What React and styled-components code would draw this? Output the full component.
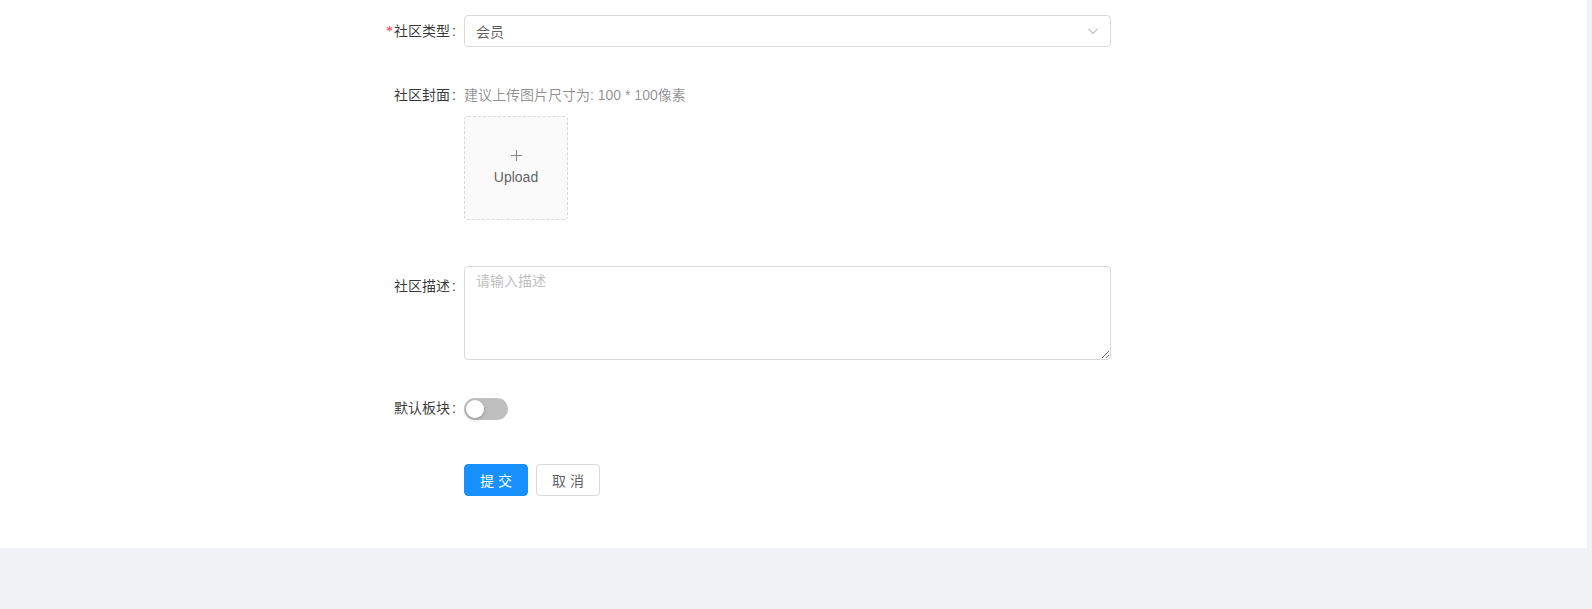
import React from 'react';
import styled, { createGlobalStyle } from 'styled-components';

const GlobalStyle = createGlobalStyle`
  html, body {
    margin: 0;
    padding: 0;
    background: #f0f2f5;
  }

  body {
    font-family: "Liberation Sans", "Noto Sans CJK SC", sans-serif;
    font-size: 14px;
    color: rgba(0, 0, 0, 0.65);
  }
`;

const Page = styled.div`
  width: 1592px;
  height: 609px;
  background: #f0f2f5;
  overflow: hidden;
`;

const Panel = styled.div`
  width: 1587px;
  height: 548px;
  background: #fff;
  box-sizing: border-box;
  padding-top: 11px;
`;

const FormItem = styled.div`
  display: flex;
  align-items: flex-start;
  margin-bottom: ${(p) => p.$mb || 24}px;
`;

const Label = styled.label`
  width: 464px;
  flex-shrink: 0;
  text-align: right;
  line-height: 40px;
  height: 40px;
  color: rgba(0, 0, 0, 0.8);
  white-space: nowrap;

  &::after {
    content: ':';
    margin: 0 8px 0 2px;
  }
`;

const Required = styled.span`
  color: #f5222d;
  margin-right: 1px;
  font-family: "Liberation Serif", serif;
  font-size: 14px;
`;

const Control = styled.div`
  width: 647px;
  min-height: 40px;
  display: flex;
  flex-direction: column;
  justify-content: ${(p) => (p.$top ? 'flex-start' : 'center')};
`;

const Select = styled.div`
  height: 32px;
  box-sizing: border-box;
  border: 1px solid #d9d9d9;
  border-radius: 4px;
  display: flex;
  align-items: center;
  justify-content: space-between;
  padding: 0 11px;
  color: rgba(0, 0, 0, 0.65);
`;

const Arrow = styled.svg`
  width: 12px;
  height: 12px;
  color: rgba(0, 0, 0, 0.25);
`;

const Hint = styled.div`
  line-height: 40px;
  height: 40px;
  color: rgba(0, 0, 0, 0.45);
`;

const UploadCard = styled.div`
  width: 104px;
  height: 104px;
  margin-top: 1px;
  box-sizing: border-box;
  border: 1px dashed #d9d9d9;
  border-radius: 4px;
  background: #fafafa;
  display: flex;
  flex-direction: column;
  align-items: center;
  justify-content: center;
  gap: 5px;
`;

const PlusIcon = styled.svg`
  width: 13px;
  height: 13px;
  color: #888;
`;

const UploadText = styled.div`
  color: rgba(0, 0, 0, 0.65);
  line-height: 20px;
`;

const TextArea = styled.textarea`
  display: block;
  width: 647px;
  height: 94px;
  box-sizing: border-box;
  border: 1px solid #d9d9d9;
  border-radius: 4px;
  padding: 4px 11px;
  font-family: inherit;
  font-size: 14px;
  line-height: 1.5;
  color: rgba(0, 0, 0, 0.65);
  resize: vertical;
  outline: none;

  &::placeholder {
    color: #bfbfbf;
  }
`;

const Switch = styled.button`
  position: relative;
  display: block;
  margin-top: 2px;
  width: 44px;
  height: 22px;
  border: none;
  border-radius: 100px;
  padding: 0;
  background: rgba(0, 0, 0, 0.25);
  cursor: pointer;

  &::after {
    content: '';
    position: absolute;
    top: 2px;
    left: 2px;
    width: 18px;
    height: 18px;
    border-radius: 50%;
    background: #fff;
    box-shadow: 0 2px 4px 0 rgba(0, 35, 11, 0.2);
  }
`;

const Actions = styled.div`
  display: flex;
  align-items: center;
  gap: 8px;
  height: 40px;
`;

const Button = styled.button`
  width: 64px;
  height: 32px;
  box-sizing: border-box;
  border-radius: 4px;
  font-family: inherit;
  font-size: 14px;
  letter-spacing: 4px;
  text-indent: 4px;
  padding: 0;
  cursor: pointer;
  border: 1px solid ${(p) => (p.$primary ? '#1890ff' : '#d9d9d9')};
  background: ${(p) => (p.$primary ? '#1890ff' : '#fff')};
  color: ${(p) => (p.$primary ? '#fff' : 'rgba(0, 0, 0, 0.65)')};
`;

export default function App() {
  return (
    <Page>
      <GlobalStyle />
      <Panel>
        <FormItem $mb={24}>
          <Label>
            <Required>*</Required>社区类型
          </Label>
          <Control>
            <Select>
              <span>会员</span>
              <Arrow viewBox="0 0 12 12" fill="none">
                <path d="M1.5 4l4.5 4.5L10.5 4" stroke="currentColor" strokeWidth="1.1" />
              </Arrow>
            </Select>
          </Control>
        </FormItem>

        <FormItem $mb={46}>
          <Label>社区封面</Label>
          <Control $top>
            <Hint>建议上传图片尺寸为: 100 * 100像素</Hint>
            <UploadCard>
              <PlusIcon viewBox="0 0 14 14" fill="none">
                <path d="M7 1v12M1 7h12" stroke="currentColor" strokeWidth="1.2" />
              </PlusIcon>
              <UploadText>Upload</UploadText>
            </UploadCard>
          </Control>
        </FormItem>

        <FormItem $mb={28}>
          <Label>社区描述</Label>
          <Control $top>
            <TextArea placeholder="请输入描述" />
          </Control>
        </FormItem>

        <FormItem $mb={32}>
          <Label>默认板块</Label>
          <Control>
            <div>
              <Switch aria-label="默认板块" />
            </div>
          </Control>
        </FormItem>

        <FormItem $mb={0}>
          <Label as="div" style={{ visibility: 'hidden' }} />
          <Control>
            <Actions>
              <Button $primary>提交</Button>
              <Button>取消</Button>
            </Actions>
          </Control>
        </FormItem>
      </Panel>
    </Page>
  );
}
